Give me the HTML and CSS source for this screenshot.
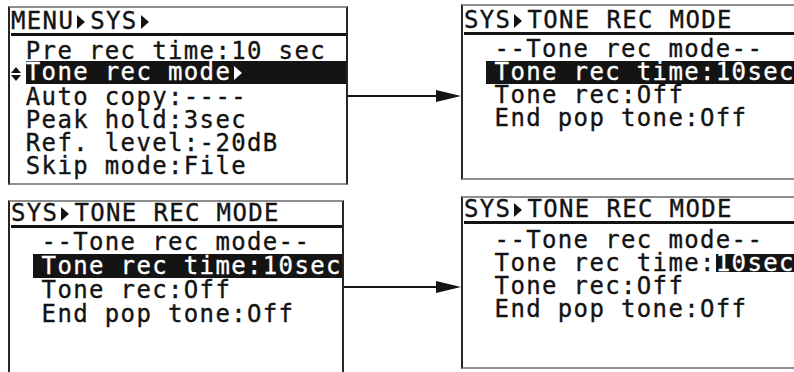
FILE: index.html
```html
<!DOCTYPE html>
<html lang="en">
<head>
<meta charset="utf-8">
<title>SYS Tone rec mode</title>
<link rel="stylesheet" href="styles.css">
</head>
<body>
<main class="sheet">
  <div class="row row-top">
    <section class="lcd lcd-menu">
      <div class="lcd-head">MENU<svg class="tri" viewBox="0 0 8 14"><path d="M0 0L8 7L0 14Z"/></svg>SYS<svg class="tri" viewBox="0 0 8 14"><path d="M0 0L8 7L0 14Z"/></svg></div>
      <ul class="lcd-list">
        <li class="item"><span class="cell"></span>Pre rec time:10 sec</li>
        <li class="item sel"><span class="cell"><svg class="updown" viewBox="0 0 10 14"><path d="M0 6L5 0L10 6Z M0 8L5 14L10 8Z"/></svg></span><span class="bar">Tone rec mode<svg class="tri" viewBox="0 0 8 14"><path d="M0 0L8 7L0 14Z"/></svg></span></li>
        <li class="item"><span class="cell"></span>Auto copy:----</li>
        <li class="item"><span class="cell"></span>Peak hold:3sec</li>
        <li class="item"><span class="cell"></span>Ref. level:-20dB</li>
        <li class="item"><span class="cell"></span>Skip mode:File</li>
      </ul>
    </section>
    <div class="arrow arrow-top"><span class="shaft"></span><svg class="head" viewBox="0 0 25 12"><path d="M0 0L25 6L0 12Z"/></svg></div>
    <section class="lcd lcd-a">
      <div class="lcd-head">SYS<svg class="tri" viewBox="0 0 8 14"><path d="M0 0L8 7L0 14Z"/></svg>TONE REC MODE</div>
      <ul class="lcd-list">
        <li class="sub">--Tone rec mode--</li>
        <li class="sub sub-sel">Tone rec time:10sec</li>
        <li class="sub">Tone rec:Off</li>
        <li class="sub">End pop tone:Off</li>
      </ul>
    </section>
  </div>
  <div class="row row-bottom">
    <section class="lcd lcd-b">
      <div class="lcd-head">SYS<svg class="tri" viewBox="0 0 8 14"><path d="M0 0L8 7L0 14Z"/></svg>TONE REC MODE</div>
      <ul class="lcd-list">
        <li class="sub">--Tone rec mode--</li>
        <li class="sub sub-sel">Tone rec time:10sec</li>
        <li class="sub">Tone rec:Off</li>
        <li class="sub">End pop tone:Off</li>
      </ul>
    </section>
    <div class="arrow arrow-bottom"><span class="shaft"></span><svg class="head" viewBox="0 0 25 12"><path d="M0 0L25 6L0 12Z"/></svg></div>
    <section class="lcd lcd-c">
      <div class="lcd-head">SYS<svg class="tri" viewBox="0 0 8 14"><path d="M0 0L8 7L0 14Z"/></svg>TONE REC MODE</div>
      <ul class="lcd-list">
        <li class="sub">--Tone rec mode--</li>
        <li class="sub">Tone rec time:<span class="val">10sec</span></li>
        <li class="sub">Tone rec:Off</li>
        <li class="sub">End pop tone:Off</li>
      </ul>
    </section>
  </div>
</main>
</body>
</html>
```
FILE: styles.css
```css
html, body {
  margin: 0;
  padding: 0;
  width: 794px;
  height: 372px;
  overflow: hidden;
  background: #ffffff;
}

.sheet {
  padding-left: 8px;
  font-family: "DejaVu Sans Mono", "Liberation Mono", monospace;
  font-size: 24px;
  font-weight: 400;
  letter-spacing: 1.35px;
  -webkit-text-stroke: 0.35px currentColor;
  color: #131313;
}

.row {
  display: flex;
  align-items: flex-start;
}

.row-top { height: 192px; }
.row-bottom { height: 180px; }

.lcd {
  flex: none;
  box-sizing: border-box;
  border-style: solid;
  border-width: 2px;
  border-color: #8e8e8e #262626 #8e8e8e #262626;
  overflow: hidden;
  white-space: nowrap;
}

.lcd-head {
  line-height: 23px;
  border-bottom: 3px solid #141414;
  margin-left: 1px;
}

.lcd-list {
  list-style: none;
  margin: 0;
  padding: 0;
  line-height: 23px;
}

.tri {
  display: inline-block;
  width: 8px;
  height: 14px;
  margin: 0 5px 0 3px;
  vertical-align: 0;
  fill: currentColor;
}

/* panel 1: main menu */
.lcd-menu {
  width: 340px;
  height: 179px;
  margin-top: 6px;
}
.lcd-menu .lcd-head { padding-top: 2px; }
.lcd-menu .lcd-list { margin-top: 4px; }

.item {
  display: flex;
  height: 23px;
}
.cell {
  flex: none;
  width: 15.8px;
  display: flex;
  align-items: center;
}
.item.sel { margin: -2px 0 2px; }
.bar {
  flex: 1;
  background: #141414;
  color: #ffffff;
}
.updown {
  width: 10px;
  height: 14px;
  margin-left: 1px;
  margin-top: 2px;
  fill: #141414;
}

/* submenu rows */
.sub {
  padding-left: 31.6px;
}
.sub-sel {
  margin-left: 23px;
  padding-left: 8.6px;
  background: #141414;
  color: #ffffff;
}
.val {
  display: inline-block;
  line-height: 18px;
  background: #141414;
  color: #ffffff;
}

/* panel 2: top right */
.lcd-a {
  width: 360px;
  height: 176px;
  margin-top: 4px;
}
.lcd-a .lcd-head { padding-top: 3px; }
.lcd-a .lcd-list { margin-top: 3px; }

/* panel 3: bottom left */
.lcd-b {
  width: 336px;
  height: 190px;
  margin-top: 8px;
}
.lcd-b .lcd-list {
  margin-top: 2px;
  line-height: 24px;
}

/* panel 4: bottom right */
.lcd-c {
  width: 360px;
  height: 173px;
  margin-top: 4px;
}
.lcd-c .lcd-list { margin-top: 5px; }

/* arrows */
.arrow {
  flex: none;
  display: flex;
  align-items: center;
  height: 12px;
}
.arrow-top {
  width: 113px;
  margin-top: 90px;
}
.arrow-bottom {
  width: 117px;
  margin-top: 89px;
}
.shaft {
  flex: 1;
  height: 2px;
  background: #141414;
}
.head {
  flex: none;
  width: 25px;
  height: 12px;
  fill: #141414;
}
```
